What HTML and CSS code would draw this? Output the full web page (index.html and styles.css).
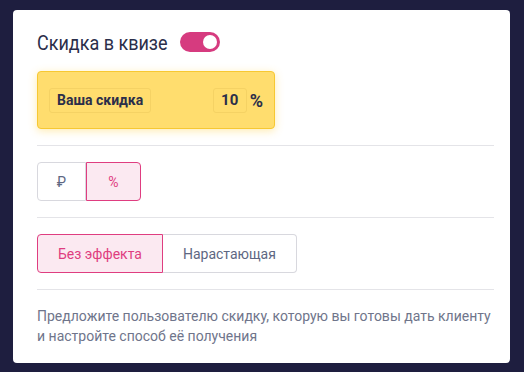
FILE: index.html
```html
<!DOCTYPE html>
<html lang="ru">
<head>
    <meta charset="UTF-8">
    <title>Скидка в квизе</title>
    <link rel="stylesheet" href="styles.css">
</head>
<body>
    <div class="card">
        <div class="head">
            <span class="title">Скидка в квизе</span>
            <span class="toggle"><span class="knob"></span></span>
        </div>

        <div class="promo">
            <span class="promo-label">Ваша скидка</span>
            <span class="promo-value">10</span>
            <span class="promo-unit">%</span>
        </div>

        <hr class="divider">

        <div class="segment">
            <button class="seg-btn rub">₽</button>
            <button class="seg-btn pct active">%</button>
        </div>

        <hr class="divider">

        <div class="segment">
            <button class="seg-btn active">Без эффекта</button>
            <button class="seg-btn">Нарастающая</button>
        </div>

        <hr class="divider">

        <p class="hint">Предложите пользователю скидку, которую вы готовы дать клиенту и настройте способ её получения</p>
    </div>
</body>
</html>
```

FILE: styles.css
```css
body {
    margin: 0;
    padding: 10px 14px 9px 13px;
    background: #1e1e3f;
    font-family: Roboto, "Noto Sans", sans-serif;
}
.card {
    background: #fff;
    border-radius: 4px;
    padding: 20px 16px 17px 24px;
}
.head {
    display: flex;
    align-items: center;
    gap: 12px;
    height: 24px;
}
.title {
    font-size: 18px;
    color: #2b2e4a;
    transform: scaleY(1.08);
}
.toggle {
    width: 40px;
    height: 20px;
    border-radius: 10px;
    background: #d63b7f;
    display: flex;
    align-items: center;
    justify-content: flex-end;
    padding: 0 3px;
    box-sizing: border-box;
}
.knob {
    width: 14px;
    height: 14px;
    border-radius: 50%;
    background: #fff;
}
.promo {
    margin-top: 17px;
    width: 238px;
    height: 58px;
    box-sizing: border-box;
    background: #ffdd6e;
    border: 1px solid #f7c832;
    border-radius: 4px;
    box-shadow: 0 2px 8px rgba(255, 210, 80, 0.45);
    display: flex;
    align-items: center;
    padding: 0 11px;
}
.promo-label,
.promo-value {
    border: 1px solid #f5d264;
    border-radius: 3px;
    height: 25px;
    box-sizing: border-box;
    display: flex;
    align-items: center;
    font-size: 14px;
    font-weight: bold;
    color: #2b2e4a;
}
.promo-label {
    padding: 0 7px;
}
.promo-value {
    margin-left: auto;
    width: 34px;
    justify-content: center;
    font-size: 15px;
}
.promo-unit {
    margin-left: 3px;
    font-size: 18px;
    font-weight: bold;
    color: #2b2e4a;
}
.divider {
    border: 0;
    border-top: 1px solid #e4e4e8;
    margin: 16px 0;
}
.segment {
    display: flex;
}
.seg-btn {
    height: 39px;
    font-family: inherit;
    font-size: 14px;
    color: #5e6782;
    background: #fff;
    border: 1px solid #d8d8de;
    padding: 0 20px;
    cursor: pointer;
}
.seg-btn:first-child {
    border-radius: 4px 0 0 4px;
}
.seg-btn:last-child {
    border-radius: 0 4px 4px 0;
    border-left: 0;
}
.seg-btn.active {
    background: #fbe9f1;
    border: 1px solid #df3d80;
    color: #df3d80;
}
.rub {
    width: 49px;
    padding: 0;
}
.pct {
    width: 55px;
    padding: 0;
}
.hint {
    margin: 0;
    font-size: 14px;
    line-height: 20px;
    color: #6f758b;
}
```
